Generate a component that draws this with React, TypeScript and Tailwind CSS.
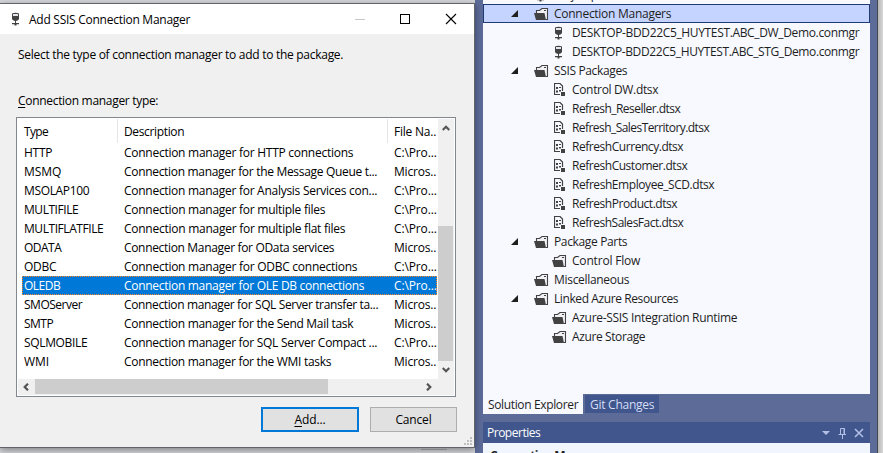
import { useLayoutEffect, useRef } from "react";

/** A single line of text whose tracking is adjusted so that it spans `w` pixels. */
function Label({ text, w, className = "", accel = false }: { text: string; w: number; className?: string; accel?: boolean }) {
  const ref = useRef<HTMLSpanElement>(null);
  useLayoutEffect(() => {
    const el = ref.current;
    if (!el) return;
    el.style.letterSpacing = "0px";
    const natural = el.getBoundingClientRect().width;
    el.style.letterSpacing = `${(w + 0.2 - natural) / text.length}px`;
  }, [text, w]);
  return (
    <span ref={ref} className={`inline-block whitespace-pre ${className}`}>
      {accel ? <><span className="underline underline-offset-2">{text[0]}</span>{text.slice(1)}</> : text}
    </span>
  );
}

function ServerIcon({ className = "" }: { className?: string }) {
  return (
    <svg width="9" height="14" viewBox="0 0 9 14" className={`block shrink-0 ${className}`}>
      <path d="M1 1.500 Q4.500 0 8 1.500 V7 Q7.500 8.600 5 9 V11 H8 V12.300 H5.500 V13.500 H3.500 V12.300 H1 V11 H4 V9 Q1.500 8.600 1 7Z" fill="#424242" />
      <path d="M2 2 H7 V4 H2Z" fill="#e4e6eb" />
    </svg>
  );
}

function FolderIcon() {
  return (
    <svg width="15" height="14" viewBox="0 0 15 14" className="block shrink-0">
      <path d="M2.500 6 V3.500 H5.500 L8 1.500 H13.500 V12.500 H12" fill="#f1f1f5" stroke="#424242" strokeWidth="1.100" />
      <path d="M10 3.500 H12" stroke="#424242" />
      <path d="M0 6 H10.500 L12 13 H2Z" fill="#424242" />
    </svg>
  );
}

function PackageIcon() {
  return (
    <svg width="12" height="14" viewBox="0 0 12 14" className="block shrink-0">
      <path d="M6 11.500 H.5 V.5 H6 L8.500 3 V8" fill="none" stroke="#424242" strokeWidth="1.200" />
      <path d="M2 4h2v2H2zM5 4h2v1H5zM2 7.500h2v2H2zM5 7h2v1.500H5zM7 9h4v4H7z" fill="#424242" />
    </svg>
  );
}

type Kind = "folder" | "server" | "package";
type Node = { text: string; w: number; kind: Kind; level: 1 | 2; open?: boolean; selected?: boolean };

const tree: Node[] = [
  { text: "Project.params", w: 75, kind: "server", level: 1 },
  { text: "Connection Managers", w: 117, kind: "folder", level: 1, open: true, selected: true },
  { text: "DESKTOP-BDD22C5_HUYTEST.ABC_DW_Demo.conmgr", w: 287, kind: "server", level: 2 },
  { text: "DESKTOP-BDD22C5_HUYTEST.ABC_STG_Demo.conmgr", w: 287, kind: "server", level: 2 },
  { text: "SSIS Packages", w: 73, kind: "folder", level: 1, open: true },
  { text: "Control DW.dtsx", w: 86, kind: "package", level: 2 },
  { text: "Refresh_Reseller.dtsx", w: 108, kind: "package", level: 2 },
  { text: "Refresh_SalesTerritory.dtsx", w: 137, kind: "package", level: 2 },
  { text: "RefreshCurrency.dtsx", w: 111, kind: "package", level: 2 },
  { text: "RefreshCustomer.dtsx", w: 115, kind: "package", level: 2 },
  { text: "RefreshEmployee_SCD.dtsx", w: 142, kind: "package", level: 2 },
  { text: "RefreshProduct.dtsx", w: 105, kind: "package", level: 2 },
  { text: "RefreshSalesFact.dtsx", w: 111, kind: "package", level: 2 },
  { text: "Package Parts", w: 73, kind: "folder", level: 1, open: true },
  { text: "Control Flow", w: 68, kind: "folder", level: 2 },
  { text: "Miscellaneous", w: 75, kind: "folder", level: 1 },
  { text: "Linked Azure Resources", w: 124, kind: "folder", level: 1, open: true },
  { text: "Azure-SSIS Integration Runtime", w: 165, kind: "folder", level: 2 },
  { text: "Azure Storage", w: 73, kind: "folder", level: 2 },
];

function TreeRow({ node }: { node: Node }) {
  return (
    <div className={`flex h-[19px] shrink-0 items-center border ${node.selected ? "border-[#1f3b73] bg-[#c5d4ff]" : "border-transparent"}`}>
      <div className={`flex shrink-0 ${node.level === 1 ? "w-[50px]" : "w-[68px]"}`}>
        {node.open && (
          <svg width="7" height="7" viewBox="0 0 7 7" className="ml-[27px] block"><path d="M7 0 V7 H0Z" fill="#1e1e1e" /></svg>
        )}
      </div>
      <div className={`flex w-5 shrink-0 ${node.kind === "folder" ? "" : "pl-[2px]"}`}>
        {node.kind === "folder" && <FolderIcon />}
        {node.kind === "server" && <ServerIcon />}
        {node.kind === "package" && <PackageIcon />}
      </div>
      <Label text={node.text} w={node.w} className="text-[#1e1e1e]" />
    </div>
  );
}

const rows: [string, number, string, number, boolean][] = [
  ["HTTP", 28, "Connection manager for HTTP connections", 229, true],
  ["MSMQ", 37, "Connection manager for the Message Queue t...", 253, false],
  ["MSOLAP100", 65, "Connection manager for Analysis Services con...", 253, true],
  ["MULTIFILE", 54, "Connection manager for multiple files", 201, true],
  ["MULTIFLATFILE", 79, "Connection manager for multiple flat files", 221, true],
  ["ODATA", 37, "Connection Manager for OData services", 210, false],
  ["ODBC", 32, "Connection manager for ODBC connections", 233, true],
  ["OLEDB", 36, "Connection manager for OLE DB connections", 240, true],
  ["SMOServer", 58, "Connection manager for SQL Server transfer ta...", 254, false],
  ["SMTP", 29, "Connection manager for the Send Mail task", 229, false],
  ["SQLMOBILE", 63, "Connection manager for SQL Server Compact ...", 253, true],
  ["WMI", 25, "Connection manager for the WMI tasks", 207, false],
];

function Chevron({ className = "" }: { className?: string }) {
  return (
    <svg width="8" height="8" viewBox="0 0 8 8" className={`block ${className}`}>
      <path d="M.7 6 L4 2.700 L7.300 6" fill="none" stroke="#555" strokeWidth="2.200" />
    </svg>
  );
}

function ConnectionList() {
  return (
    <div className="ml-4 flex h-[280px] w-[440px] flex-col border border-[#828790] bg-white p-px">
      <div className="flex h-[260px]">
        <div className="w-[420px] shrink-0 overflow-hidden">
          <div className="flex h-6 items-center">
            <div className="flex h-full w-[100px] shrink-0 items-center border-r border-[#e5e5e5] pl-[6px]"><Label text="Type" w={24} /></div>
            <div className="flex h-full w-[270px] shrink-0 items-center border-r border-[#e5e5e5] pl-[6px]"><Label text="Description" w={60} /></div>
            <div className="pl-[6px]"><Label text="File Na.." w={42} /></div>
          </div>
          {rows.map(([type, tw, desc, dw, path], i) => (
            <div key={type} className={`ml-1 flex h-[19px] w-[415px] items-center border border-dotted ${i === 7 ? "border-[#ff8728] bg-[#0078d7] text-white" : "border-transparent"}`}>
              <div className="w-[100px] shrink-0 pl-px"><Label text={type} w={tw} /></div>
              <div className="w-[270px] shrink-0 pl-px"><Label text={desc} w={dw} /></div>
              <div className="shrink-0 pl-px"><Label text={path ? "C:\\Pro..." : "Micros.."} w={path ? 42.5 : 42} /></div>
            </div>
          ))}
        </div>
        <div className="flex w-4 flex-col bg-[#f0f0f0]">
          <div className="flex h-[107px] w-[15px] justify-center pt-[5px]"><Chevron /></div>
          <div className="h-[135px] w-[15px] bg-[#cdcdcd]" />
          <div className="flex h-[18px] w-[15px] justify-center pt-[5px]"><Chevron className="rotate-180" /></div>
        </div>
      </div>
      <div className="flex h-4 items-center bg-[#f0f0f0]">
        <div className="flex w-[17px] justify-center pr-px"><Chevron className="-rotate-90" /></div>
        <div className="h-[15px] w-[293px] self-start bg-[#cdcdcd]" />
        <div className="ml-[97px]"><Chevron className="rotate-90" /></div>
      </div>
    </div>
  );
}

function Dialog() {
  return (
    <div className="flex h-[445px] w-[475px] flex-col border-y border-r border-[#626469] bg-[#f0f0f0] shadow-[0_2px_7px_rgba(0,0,0,0.4)]">
      <div className="flex h-[30px] shrink-0 items-center bg-white">
        <ServerIcon className="ml-[11px]" />
        <Label text="Add SSIS Connection Manager" w={161} className="ml-[9px]" />
        <svg width="103" height="12" viewBox="0 0 103 12" fill="none" className="ml-auto mr-[16px] block">
          <path d="M0 6.500 H10" stroke="#c7c7c7" />
          <rect x="45.500" y="1.500" width="9" height="9" stroke="#000" />
          <path d="M91 1 L101 11 M101 1 L91 11" stroke="#000" strokeWidth="1.100" />
        </svg>
      </div>
      <div className="flex h-10 shrink-0 items-center pl-[18px]"><Label text="Select the type of connection manager to add to the package." w={325} /></div>
      <div className="mt-[15px] flex h-[22px] shrink-0 items-center pl-[18px]"><Label text="Connection manager type:" w={140} accel /></div>
      <div className="mt-[6px] shrink-0"><ConnectionList /></div>
      <div className="mt-[10px] flex h-[25px] shrink-0 gap-[11px] pl-[261px]">
        <button className="flex w-[98px] items-center justify-center border-2 border-[#0078d7] bg-[#e1e1e1]"><Label text="Add..." w={31} accel /></button>
        <button className="flex w-[87px] items-center justify-center border border-[#adadad] bg-[#e1e1e1]"><Label text="Cancel" w={36} /></button>
      </div>
      <svg width="9" height="9" viewBox="0 0 9 9" className="ml-[464px] mt-[5px] block shrink-0">
        <path d="M6 0h2v2H6zM3 3h2v2H3zM6 3h2v2H6zM0 6h2v2H0zM3 6h2v2H3zM6 6h2v2H6z" fill="#bfbfbf" />
      </svg>
    </div>
  );
}

export default function App() {
  return (
    <div className="flex h-[453px] w-[883px] overflow-hidden bg-[#d5d6da] font-['Open_Sans','Noto_Sans',sans-serif] text-[12px] leading-[17px] text-black">
      <div className="relative z-10 w-[475px] shrink-0 pt-[3px]">
        <Dialog />
        <div className="relative ml-[421px] mt-px h-px w-[26px] bg-[#858689]" />
      </div>
      <div className="flex w-[403px] shrink-0 border-r border-[#424651] bg-[#5d6b99] pl-2">
        <div className="flex w-[387px] flex-col">
          <div className="flex h-[394px] shrink-0 flex-col overflow-hidden bg-[#f7f9fe]">
            <div className="-mt-[15px] flex flex-col">
              {tree.map((n) => <TreeRow key={n.text} node={n} />)}
            </div>
          </div>
          <div className="flex h-[28px] shrink-0 items-start">
            <div className="flex h-5 w-[100px] items-center bg-[#f7f9fe] pl-[5px]"><Label text="Solution Explorer" w={90} className="text-[#1e1e1e]" /></div>
            <div className="ml-[2px] mt-px flex h-[18px] w-[74px] items-center bg-[#40568d] pl-[5px]"><Label text="Git Changes" w={64} className="text-[#d5ddf5]" /></div>
          </div>
          <div className="flex h-[21px] shrink-0 items-center bg-[#40568d] pl-1">
            <Label text="Properties" w={53} className="text-white" />
            <svg width="43" height="12" viewBox="0 0 43 12" fill="none" className="ml-auto mr-[5px] block">
              <path d="M0 4 H8 L4 8Z" fill="#b3bfe5" />
              <path d="M18.500 7 V1.500 H22.500 V7 M16.500 7.500 H24 M20.500 8 V12" stroke="#b3bfe5" />
              <path d="M22 1.500 V7" stroke="#b3bfe5" />
              <path d="M33 2 L41 10 M41 2 L33 10" stroke="#b3bfe5" strokeWidth="1.600" />
            </svg>
          </div>
          <div className="h-[10px] shrink-0 overflow-hidden bg-[#f1f5fd] pl-[7px] pt-[4px]">
            <Label text="Connection Managers" w={118} className="font-bold text-[#1e1e1e]" />
          </div>
        </div>
      </div>
      <div className="w-[5px] bg-gradient-to-r from-[#b7b7b8] to-[#d8d8d8]" />
    </div>
  );
}
